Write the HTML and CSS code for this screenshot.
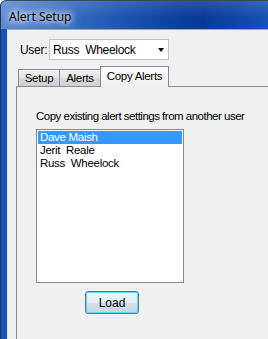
FILE: index.html
```html
<!DOCTYPE html>
<html lang="en">
<head>
    <meta charset="UTF-8">
    <title>Alert Setup</title>
    <link rel="stylesheet" href="styles.css">
</head>
<body>

    <div class="window">
        <div class="titlebar"><span class="title">Alert Setup</span></div>

        <div class="frame">
            <div class="client">
                <div class="user-row">
                    <span class="user-label">User:</span>
                    <div class="combo">
                        <span class="combo-value">Russ&nbsp; Wheelock</span>
                        <span class="combo-arrow"></span>
                    </div>
                </div>

                <div class="tabs">
                    <div class="tab tab-setup">Setup</div>
                    <div class="tab tab-alerts">Alerts</div>
                    <div class="tab tab-active">Copy Alerts</div>
                </div>

                <div class="panel">
                    <p class="hint">Copy existing alert settings from another user</p>
                    <ul class="listbox">
                        <li class="item item-selected">Dave Maish</li>
                        <li class="item">Jerit&nbsp; Reale</li>
                        <li class="item">Russ&nbsp; Wheelock</li>
                    </ul>
                    <button class="button">Load</button>
                </div>
            </div>
        </div>
    </div>

</body>
</html>
```

FILE: styles.css
```css
body {
    margin: 0;
    overflow: hidden;
    font-family: "Liberation Sans", Arial, sans-serif;
    font-size: 11px;
    color: #000;
}
.window {
    height: 339px;
    display: flex;
    flex-direction: column;
    background: #1450b0;
    border-left: 1px solid #24345a;
    border-top: 1px solid #3a4866;
    border-top-left-radius: 6px;
    overflow: hidden;
}
.titlebar {
    height: 28px;
    padding-left: 7px;
    display: flex;
    align-items: center;
    background:
        linear-gradient(to bottom, rgba(255,255,255,0.12), rgba(255,255,255,0) 60%),
        linear-gradient(to right, #5d8dd2 0%, #3f73c2 20%, #1d55b0 45%, #0b3d9a 68%, #0a3a96 76%, #1752b6 100%);
}
.title {
    font-family: "Noto Sans", "Liberation Sans", sans-serif;
    font-size: 12px;
    color: #000;
    padding: 2px 4px 0 1px;
    text-shadow: 0 0 5px #fff, 0 0 9px #fff, 0 0 13px rgba(255,255,255,0.8);
}
.frame {
    flex: 1;
    display: flex;
    padding-left: 6px;
    background: linear-gradient(to right, #1655b8, #0e48a8);
}
.client {
    flex: 1;
    display: flex;
    flex-direction: column;
    padding: 9px 0 0 8px;
    background: #f0f0f0;
    border-left: 1px solid #dde5f0;
    border-top: 1px solid #9aa8bc;
}
.user-row {
    display: flex;
    align-items: center;
    margin-left: 4px;
    height: 21px;
}
.user-label {
    width: 29px;
    font-size: 12px;
    letter-spacing: -0.3px;
}
.combo {
    width: 118px;
    height: 19px;
    display: flex;
    align-items: center;
    justify-content: space-between;
    background: #fff;
    border: 1px solid #c4c4c4;
}
.combo-value {
    padding-left: 3px;
    font-size: 12px;
    letter-spacing: -0.3px;
}
.combo-arrow {
    width: 0;
    height: 0;
    margin-right: 4px;
    border-left: 3.5px solid transparent;
    border-right: 3.5px solid transparent;
    border-top: 4px solid #000;
}
.tabs {
    display: flex;
    align-items: flex-end;
    height: 20px;
    margin-top: 6px;
    padding-left: 2px;
}
.tab {
    height: 17px;
    box-sizing: border-box;
    border-left: 1px solid #898c95;
    border-top: 1px solid #898c95;
    background: linear-gradient(#f2f2f2, #e3e3e3 50%, #dadada 50%, #cfcfcf);
    text-align: center;
    line-height: 17px;
    font-size: 11.5px;
    letter-spacing: -0.3px;
}
.tab-setup {
    width: 41px;
}
.tab-alerts {
    width: 41px;
}
.tab-active {
    position: relative;
    z-index: 1;
    width: 69px;
    height: 21px;
    margin-bottom: -1px;
    border-right: 1px solid #898c95;
    background: linear-gradient(#fcfcfc, #f0f0f0);
    line-height: 18px;
}
.panel {
    flex: 1;
    padding: 22px 0 0 19px;
    background: #f0f0f0;
    border-left: 1px solid #898c95;
    border-top: 1px solid #898c95;
}
.hint {
    margin: 0;
    font-size: 11.5px;
    line-height: 14px;
    letter-spacing: -0.5px;
    white-space: nowrap;
}
.listbox {
    list-style: none;
    width: 144px;
    height: 150px;
    margin: 6px 0 0 0;
    padding: 1px;
    box-sizing: content-box;
    background: #fff;
    border: 1px solid #828790;
}
.item {
    height: 13px;
    line-height: 13px;
    padding-left: 2px;
    font-size: 11.5px;
    letter-spacing: -0.3px;
    white-space: nowrap;
}
.item-selected {
    background: #3399ff;
    color: #fff;
}
.button {
    display: block;
    width: 54px;
    height: 23px;
    margin: 8px 0 0 49px;
    padding: 0;
    font-family: "Liberation Sans", Arial, sans-serif;
    font-size: 12px;
    color: #000;
    border: 1px solid #3c7fb1;
    border-radius: 3px;
    box-shadow: inset 0 0 0 1px #5fd6f6;
    background: linear-gradient(#f0f6fa, #e4eef4 50%, #d2dfe7 50%, #c8d6df);
}
```
